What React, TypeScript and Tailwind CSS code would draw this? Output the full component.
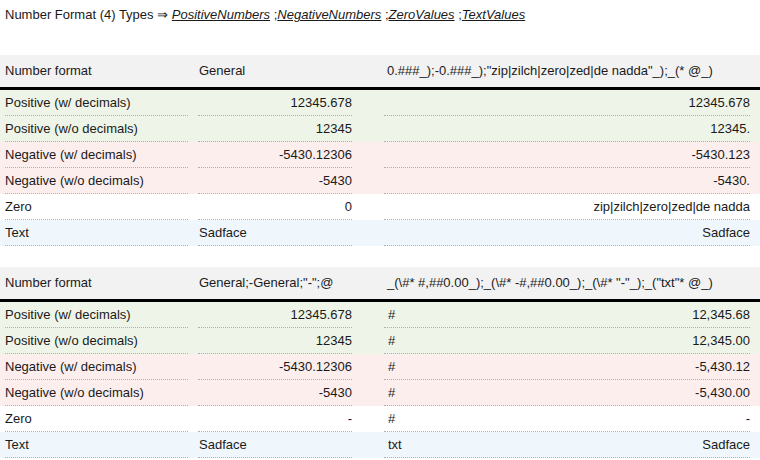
const rowBg: Record<string, string> = {
  g: "bg-[#eef5e8]",
  r: "bg-[#fdeeee]",
  w: "bg-white",
  b: "bg-[#eff7fd]",
};

type Row = { label: string; v1: string; v1left?: boolean; pre?: string; v2: string; c: string };

const t1: Row[] = [
  { label: "Positive (w/ decimals)", v1: "12345.678", v2: "12345.678", c: "g" },
  { label: "Positive (w/o decimals)", v1: "12345", v2: "12345.", c: "g" },
  { label: "Negative (w/ decimals)", v1: "-5430.12306", v2: "-5430.123", c: "r" },
  { label: "Negative (w/o decimals)", v1: "-5430", v2: "-5430.", c: "r" },
  { label: "Zero", v1: "0", v2: "zip|zilch|zero|zed|de nadda", c: "w" },
  { label: "Text", v1: "Sadface", v1left: true, v2: "Sadface", c: "b" },
];

const t2: Row[] = [
  { label: "Positive (w/ decimals)", v1: "12345.678", pre: "#", v2: "12,345.68", c: "g" },
  { label: "Positive (w/o decimals)", v1: "12345", pre: "#", v2: "12,345.00", c: "g" },
  { label: "Negative (w/ decimals)", v1: "-5430.12306", pre: "#", v2: "-5,430.12", c: "r" },
  { label: "Negative (w/o decimals)", v1: "-5430", pre: "#", v2: "-5,430.00", c: "r" },
  { label: "Zero", v1: "-", pre: "#", v2: "-", c: "w" },
  { label: "Text", v1: "Sadface", v1left: true, pre: "txt", v2: "Sadface", c: "b" },
];

function Table({ h1, h2, rows }: { h1: string; h2: string; rows: Row[] }) {
  return (
    <div>
      <div className="flex h-[35px] items-center bg-[#f2f2f2] border-b-[3px] border-black">
        <div className="w-[193px] pl-[5px]">Number format</div>
        <div className="w-[187px] pl-[6px] whitespace-nowrap">{h1}</div>
        <div className="flex-1 pl-[7px] whitespace-nowrap">{h2}</div>
      </div>
      {rows.map((r) => (
        <div key={r.label} className={`flex h-[26px] ${rowBg[r.c]}`}>
          <div className="w-[193px] px-[5px]">
            <div className="h-full flex items-center border-b border-dotted border-[#b0b0b0]">{r.label}</div>
          </div>
          <div className="w-[164px] px-[5px]">
            <div className={`h-full flex items-center border-b border-dotted border-[#b0b0b0] ${r.v1left ? "justify-start pl-[1px]" : "justify-end"}`}>{r.v1}</div>
          </div>
          <div className="flex-1 pl-[27px] pr-[10px]">
            <div className="h-full flex items-center justify-between border-b border-dotted border-[#b0b0b0] pl-[4px]">
              <span>{r.pre ?? ""}</span>
              <span>{r.v2}</span>
            </div>
          </div>
        </div>
      ))}
    </div>
  );
}

export default function App() {
  return (
    <div className="w-[760px] h-[460px] overflow-hidden bg-white text-[13px] text-[#1a1a1a]" style={{ fontFamily: '"Liberation Sans", Arial, sans-serif' }}>
      <div className="h-[55px] pt-[5px] pl-[5px]">
        Number Format (4) Types ⇒ <span className="italic underline">PositiveNumbers</span> ;<span className="italic underline">NegativeNumbers</span> ;<span className="italic underline">ZeroValues</span> ;<span className="italic underline">TextValues</span>
      </div>
      <Table h1="General" h2={'0.###_);-0.###_);"zip|zilch|zero|zed|de nadda"_);_(* @_)'} rows={t1} />
      <div className="h-[21px]" />
      <Table h1={'General;-General;"-";@'} h2={'_(\\#* #,##0.00_);_(\\#* -#,##0.00_);_(\\#* "-"_);_("txt"* @_)'} rows={t2} />
    </div>
  );
}
